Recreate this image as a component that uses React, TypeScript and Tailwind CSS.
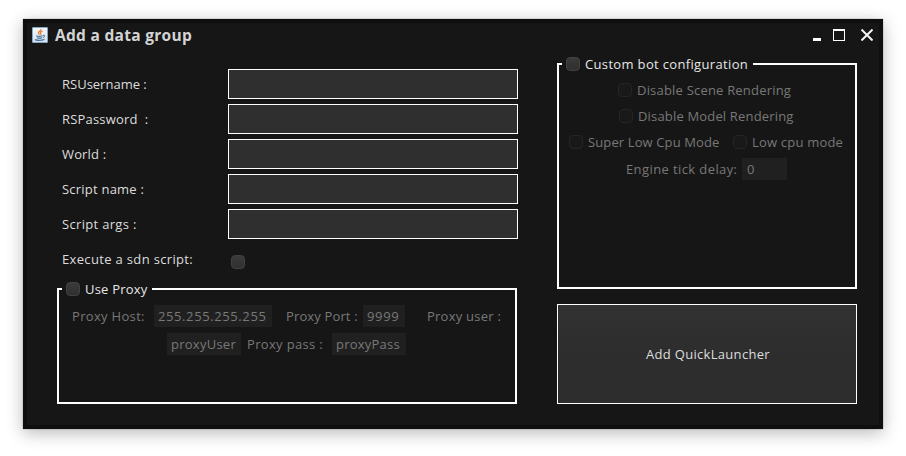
import React from "react";

function Check({ off = false, className = "" }: { off?: boolean; className?: string }) {
  return (
    <span
      className={`block size-[14px] shrink-0 rounded-[4px] border ${
        off ? "border-[#252525] bg-[#191919]" : "border-[#414141] bg-linear-to-b from-[#3a3a3a] to-[#303030]"
      } ${className}`}
    />
  );
}

function Label({ children, className }: { children: string; className: string }) {
  return <span className={`block shrink-0 whitespace-pre leading-[22px] ${className}`}>{children}</span>;
}

const fields = [
  { label: "RSUsername :", tracking: "tracking-[0px]" },
  { label: "RSPassword  :", tracking: "tracking-[0.18px]" },
  { label: "World :", tracking: "tracking-[0.15px]" },
  { label: "Script name :", tracking: "tracking-[0.22px]" },
  { label: "Script args :", tracking: "tracking-[0.32px]" },
];

function JavaIcon() {
  return (
    <svg className="size-4 shrink-0" viewBox="0 0 16 16" fill="none">
      <defs>
        <linearGradient id="tile" x1="0" y1="0" x2="0" y2="1">
          <stop offset="0" stopColor="#f4f7fa" />
          <stop offset="1" stopColor="#d3e0ec" />
        </linearGradient>
      </defs>
      <rect x="0.5" y="0.5" width="15" height="15" rx="0.5" fill="url(#tile)" stroke="#86a6c2" />
      <path d="M8.900 2c1.200 1.600-3.200 2.500-2.600 4 .3.700.9 1 1.100 1.700M10.500 4.300c-1.900.6-2.800 1.300-1.900 2.100.5.500.2 1-.4 1.400" stroke="#ee7a24" strokeWidth="1.200" />
      <path d="M4.200 8.800c1.500.7 4.800.5 6.600 0M5 10.700c1.500.6 3.800.5 5.200 0M3 12.600c2.400.9 7.200.7 9.500-.2" stroke="#47759e" strokeWidth="1.150" />
      <path d="M11 8.300c2.500-.5 2.200 1.700 0 2.200" stroke="#47759e" strokeWidth="1" />
    </svg>
  );
}

export default function App() {
  return (
    <div className="h-[456px] w-[906px] overflow-hidden bg-white pt-[19px] pl-[23px] font-['Open_Sans','Noto_Sans',sans-serif] text-[13px] text-[#dddddd]">
      <div className="flex h-[410px] w-[860px] flex-col border-4 border-[#0f0f0f] bg-[#161616] shadow-[0_4px_16px_rgba(0,0,0,0.28),0_0_1px_rgba(0,0,0,0.5)]">
        <header className="flex h-[24px] shrink-0 items-center pr-[6px] pl-[5px]">
          <JavaIcon />
          <Label className="ml-[7px] text-[15.5px] font-bold tracking-[0.29px] text-[#d4d4d4]">Add a data group</Label>
          <div className="ml-auto flex h-[12px] items-end">
            <span className="mr-[12px] block h-[3px] w-[8px] bg-white" />
            <span className="mr-[16px] block size-[12px] border border-t-2 border-white" />
            <svg className="size-[12px]" viewBox="0 0 12 12" stroke="#f4f4f4" strokeWidth="2">
              <path d="M0.500 0.500L11.500 11.500M11.500 0.500L0.500 11.500" />
            </svg>
          </div>
        </header>

        <main className="flex pl-[30px]">
          <section className="w-[500px] pt-[22px]">
            <div className="flex flex-col gap-[5px] pl-[5px]">
              {fields.map((f) => (
                <div key={f.label} className="flex h-[30px] items-center">
                  <Label className={`w-[166px] ${f.tracking}`}>{f.label}</Label>
                  <span className="block h-[30px] w-[290px] border border-white bg-[#2f2f2f]" />
                </div>
              ))}
              <div className="flex h-[30px] items-center">
                <Label className="w-[169px] tracking-[0.34px]">Execute a sdn script:</Label>
                <Check className="mt-[6px]" />
              </div>
            </div>

            <fieldset className="mt-[8px] h-[122px] w-[460px] border-2 border-white">
              <legend className="ml-[3px] flex h-[14px] items-center pr-[5px] pl-[4px]">
                <Check />
                <Label className="ml-[5px] w-[62px] tracking-[0.2px] text-[#e6e6e6]">Use Proxy</Label>
              </legend>
              <div className="flex flex-col gap-[6px] pt-[9px] text-[#787878]">
                <div className="flex pl-[13px]">
                  <Label className="w-[82px] tracking-[0.32px]">Proxy Host:</Label>
                  <Label className="w-[118px] bg-[#202020] pl-[4px] tracking-[0.6px]">255.255.255.255</Label>
                  <Label className="ml-[14px] w-[77px] tracking-[0.14px]">Proxy Port :</Label>
                  <Label className="w-[42px] bg-[#202020] pl-[4px] tracking-[0.65px]">9999</Label>
                  <Label className="ml-[22px] tracking-[0.24px]">Proxy user :</Label>
                </div>
                <div className="flex pl-[108px]">
                  <Label className="w-[74px] bg-[#202020] pl-[4px] tracking-[0.25px]">proxyUser</Label>
                  <Label className="ml-[6px] w-[85px] tracking-[0.34px]">Proxy pass :</Label>
                  <Label className="w-[74px] bg-[#202020] pl-[4px] tracking-[0.22px]">proxyPass</Label>
                </div>
              </div>
            </fieldset>
          </section>

          <section className="w-[300px] pt-[10px]">
            <fieldset className="h-[232px] border-2 border-white">
              <legend className="ml-[3px] flex h-[14px] items-center pr-[5px] pl-[4px]">
                <Check />
                <Label className="ml-[5px] w-[163px] tracking-[0.34px] text-[#e6e6e6]">Custom bot configuration</Label>
              </legend>
              <div className="flex flex-col pt-[6px] text-[#787878]">
                <div className="flex h-[26px] items-center pl-[59px]">
                  <Check off />
                  <Label className="ml-[5px] tracking-[0.2px]">Disable Scene Rendering</Label>
                </div>
                <div className="flex h-[26px] items-center pl-[60px]">
                  <Check off />
                  <Label className="ml-[5px] tracking-[0.17px]">Disable Model Rendering</Label>
                </div>
                <div className="flex h-[26px] items-center pl-[10px]">
                  <Check off />
                  <Label className="ml-[5px] w-[145px] tracking-[0.12px]">Super Low Cpu Mode</Label>
                  <Check off />
                  <Label className="ml-[5px] tracking-[0.2px]">Low cpu mode</Label>
                </div>
                <div className="mt-[3px] flex pl-[67px]">
                  <Label className="w-[116px] tracking-[0.4px]">Engine tick delay:</Label>
                  <Label className="w-[45px] bg-[#202020] pl-[5px] tracking-[0.3px]">0</Label>
                </div>
              </div>
            </fieldset>
            <button className="mt-[15px] block h-[100px] w-[300px] border border-white bg-linear-to-b from-[#323232] to-[#2d2d2d] to-50% pt-[2px] pl-[2px] text-center tracking-[0.3px]">
              Add QuickLauncher
            </button>
          </section>
        </main>
      </div>
    </div>
  );
}
